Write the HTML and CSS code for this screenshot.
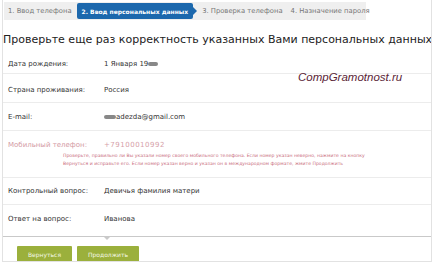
FILE: index.html
```html
<!DOCTYPE html>
<html lang="ru">

<head>
    <meta charset="UTF-8" />
    <meta name="viewport" content="width=device-width, initial-scale=1.0" />
    <title>Проверка данных</title>

    <link rel="stylesheet" href="styles.css">
</head>

<body>
    <div class="wizard">
        <!-- ШАГИ -->
        <ul class="steps">
            <li>1. Ввод телефона</li>
            <li class="active">2. Ввод персональных данных</li>
            <li>3. Проверка телефона</li>
            <li>4. Назначение пароля</li>
        </ul>

        <h1>Проверьте еще раз корректность указанных Вами персональных данных</h1>

        <span class="mark">CompGramotnost.ru</span>

        <!-- ДАННЫЕ -->
        <div class="rows">
            <div class="row first">
                <label>Дата рождения:</label>
                <span>1 Января 19<i class="blur short"></i></span>
            </div>

            <div class="row second">
                <label>Страна проживания:</label>
                <span>Россия</span>
            </div>

            <div class="row third">
                <label>E-mail:</label>
                <span><i class="blur"></i>adezda@gmail.com</span>
            </div>

            <div class="row phone">
                <div class="line">
                    <label>Мобильный телефон:</label>
                    <span>+79100010992</span>
                </div>
                <p class="hint">Проверьте, правильно ли Вы указали номер своего мобильного телефона. Если номер указан неверно, нажмите на кнопку<br>Вернуться и исправьте его. Если номер указан верно и указан он в международном формате, жмите Продолжить</p>
            </div>

            <div class="row question">
                <label>Контрольный вопрос:</label>
                <span>Девичья фамилия матери</span>
            </div>

            <div class="row last">
                <label>Ответ на вопрос:</label>
                <span>Иванова</span>
            </div>
        </div>

        <!-- КНОПКИ -->
        <div class="actions">
            <button type="button">Вернуться</button>
            <button type="button">Продолжить</button>
        </div>
    </div>
</body>

</html>
```

FILE: styles.css
```css
body {
    margin: 0;
    padding: 0 2px 0 2px;
    font-family: "DejaVu Sans", Verdana, sans-serif;
    background: #fff;
}

.wizard {
    position: relative;
    width: 428px;
    height: 261px;
    border: 1px solid #e2e2e2;
    border-top: none;
    overflow: hidden;
}

.steps {
    display: flex;
    align-items: center;
    gap: 2px;
    width: 361px;
    height: 18px;
    margin: 2px 0 0 1px;
    padding: 0 0 0 1px;
    list-style: none;
    background: #efefef;
}

.steps li {
    font-size: 6.8px;
    color: #777;
    padding: 0 3px;
    white-space: nowrap;
}

.steps li.active {
    position: relative;
    display: flex;
    align-items: center;
    height: 16px;
    padding: 0 5px;
    margin-right: 4px;
    background: #1c68ad;
    color: #fff;
    font-size: 6px;
    font-weight: bold;
    border-radius: 2px;
}

.steps li.active::after {
    content: "";
    position: absolute;
    right: -4px;
    top: 4px;
    border-left: 4px solid #1c68ad;
    border-top: 4px solid transparent;
    border-bottom: 4px solid transparent;
}

h1 {
    margin: 13px 0 0 0;
    height: 14px;
    line-height: 14px;
    font-size: 11px;
    font-weight: normal;
    color: #222;
    white-space: nowrap;
}

.mark {
    position: absolute;
    left: 295px;
    top: 71px;
    font-family: "Liberation Sans", Arial, sans-serif;
    font-style: italic;
    font-size: 11.5px;
    color: #5a2436;
}

.row {
    display: flex;
    align-items: center;
    box-sizing: border-box;
    border-bottom: 1px solid #ececec;
    font-size: 7px;
    color: #333;
}

.row.first {
    height: 27px;
    padding-top: 7px;
}

.row.second {
    height: 29px;
    padding-top: 4px;
}

.row.third {
    height: 28px;
}

.row label,
.row .line label {
    width: 96px;
    padding-left: 5px;
    flex-shrink: 0;
}

.row.phone {
    display: block;
    height: 47px;
    color: #d39aa4;
}

.row.phone .line {
    display: flex;
    align-items: center;
    padding-top: 10px;
}

.row.phone .line span {
    letter-spacing: 0.5px;
    color: #d6a0a8;
}

.hint {
    margin: 3px 0 0 60px;
    font-size: 4.6px;
    line-height: 8px;
    color: #c86a7a;
    white-space: nowrap;
}

.row.question {
    height: 27px;
}

.row.last {
    position: relative;
    height: 32px;
    padding-bottom: 4px;
    border-bottom: 1px solid #c9c9c9;
}

.row.last::after {
    content: "";
    position: absolute;
    left: 101px;
    bottom: -4px;
    border-top: 3px solid #c9c9c9;
    border-left: 3px solid transparent;
    border-right: 3px solid transparent;
}

.blur {
    display: inline-block;
    width: 12px;
    height: 4px;
    background: #888;
    border-radius: 2px;
    filter: blur(0.6px);
    vertical-align: middle;
}

.blur.short {
    width: 10px;
}

.actions {
    display: flex;
    gap: 5px;
    padding: 9px 0 0 14px;
}

.actions button {
    height: 16px;
    padding: 0 11px;
    border: none;
    border-radius: 1px;
    background: #9bb03c;
    color: #f4f8e6;
    font-family: "DejaVu Sans", Verdana, sans-serif;
    font-size: 6px;
}
```
